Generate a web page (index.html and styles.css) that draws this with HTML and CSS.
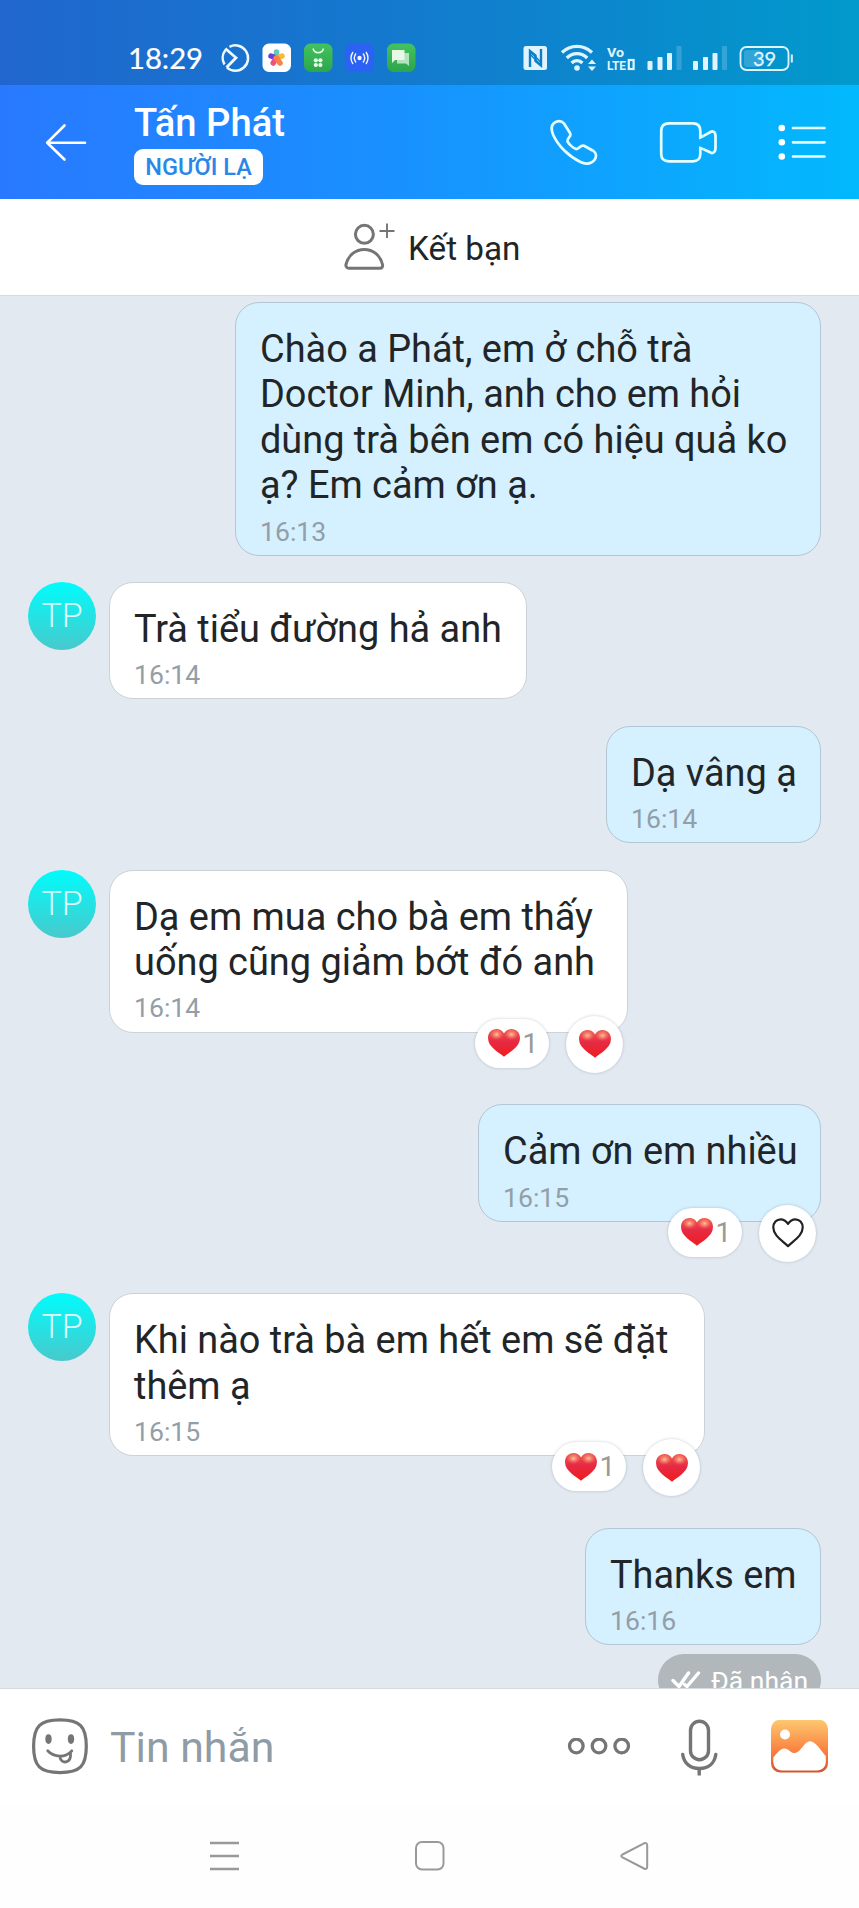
FILE: index.html
```html
<!DOCTYPE html>
<html lang="vi">
<head>
<meta charset="utf-8">
<title>Tấn Phát</title>
<link rel="stylesheet" href="styles.css">
</head>
<body>
<svg class="defs" width="0" height="0" aria-hidden="true">
  <defs>
    <linearGradient id="heart-red" x1="0" y1="0" x2="0" y2="1"><stop offset="0" stop-color="#ee5a50"/><stop offset=".45" stop-color="#e62a44"/><stop offset="1" stop-color="#f01c1c"/></linearGradient>
    <radialGradient id="heart-shine"><stop offset="0" stop-color="#ffc9a0" stop-opacity=".95"/><stop offset="1" stop-color="#ff8a6a" stop-opacity="0"/></radialGradient>
    <linearGradient id="green" x1="0" y1="0" x2="0" y2="1"><stop offset="0" stop-color="#43c35e"/><stop offset="1" stop-color="#2ca54c"/></linearGradient>
    <linearGradient id="photo" x1="0" y1="0" x2="0" y2="1"><stop offset="0" stop-color="#fdc870"/><stop offset=".6" stop-color="#fa8040"/><stop offset="1" stop-color="#d4542f"/></linearGradient>
    <symbol id="heart" viewBox="0 0 32 28">
      <path d="M16 27.700C12 24 0 18.500 0 9C0 3.500 3.700 0 8.300 0C12 0 14.800 2 16 4.500C17.200 2 20 0 23.700 0C28.300 0 32 3.500 32 9C32 18.500 20 24 16 27.700Z" fill="url(#heart-red)"/>
      <ellipse cx="8.500" cy="5.500" rx="7" ry="5.500" fill="url(#heart-shine)"/>
      <ellipse cx="23.500" cy="5.500" rx="7" ry="5.500" fill="url(#heart-shine)"/>
    </symbol>
  </defs>
</svg>
<div class="phone">
  <div class="top">
    <div class="status">
      <span class="clock">18:29</span>
      <svg class="status-left" width="196" height="32" viewBox="221 42 196 32" fill="none">
        <path d="M229.500 46.800A12.700 12.700 0 1 1 227 67.600M224.500 64.500A12.700 12.700 0 0 1 225.500 50" stroke="#eef8ff" stroke-width="2.500"/>
        <path d="M225.300 48.500L236 57.800L226.500 67.500" stroke="#eef8ff" stroke-width="2.800"/>
        <rect x="262.500" y="43.500" width="28.500" height="28.500" rx="6.500" fill="#fff"/>
        <g stroke-width="5.500" stroke-linecap="round"><path d="M276.500 57V52" stroke="#62c8bd"/><path d="M276.500 58L271 56" stroke="#6a3fd8"/><path d="M276.500 58L282 56" stroke="#fbb92e"/><path d="M276.500 58L273.200 63" stroke="#ee517f"/><path d="M276.500 58L280 63" stroke="#fa824a"/></g>
        <rect x="304" y="43.500" width="28.500" height="28.500" rx="6.500" fill="url(#green)"/>
        <path d="M313 48.500A5.400 5.400 0 0 0 323.500 48.500" stroke="#e9fbe9" stroke-width="1.500"/>
        <g fill="#e9fbe9"><circle cx="315.800" cy="60.300" r="2.100"/><circle cx="320.400" cy="60.300" r="2.100"/><circle cx="315.800" cy="65" r="2.100"/><circle cx="320.400" cy="65" r="2.100"/></g>
        <rect x="345.500" y="43.500" width="28.500" height="28.500" rx="6.500" fill="#2b62f3"/>
        <circle cx="359.500" cy="58" r="2.200" fill="#eef5ff"/>
        <path d="M356 53.500Q352.500 58 356 62.500M363 53.500Q366.500 58 363 62.500M353 52Q349 58 353 64M366 52Q370 58 366 64" stroke="#eef5ff" stroke-width="1.400"/>
        <rect x="387" y="43.500" width="28.500" height="28.500" rx="6.500" fill="url(#green)"/>
        <path d="M397 53H409V66L406 63.500H397Z" fill="#b3e3bc"/>
        <path d="M392 50H404.500V60H395L392 63Z" fill="#e7f8e9"/>
      </svg>
      <svg class="status-right" width="272" height="30" viewBox="522 42 272 30" fill="none">
        <rect x="523.500" y="45" width="23.500" height="24" rx="2.500" fill="#e0f4ff"/>
        <path d="M530 66V50L535.500 54.500V60L541 64.500V48" stroke="#0d7fc8" stroke-width="2.400"/>
        <path d="M530 50L541 61.500M530 53L541 64.500" stroke="#0d7fc8" stroke-width="1.600"/>
        <path d="M562 51.500A21.500 21.500 0 0 1 592 51.500M566.800 57A14.200 14.200 0 0 1 587.200 57M571.600 62A7.500 7.500 0 0 1 582.400 62" stroke="#e0f4ff" stroke-width="3.300"/>
        <circle cx="577" cy="67" r="2.800" fill="#e0f4ff"/>
        <path d="M588 63L592 58.500L596 63ZM588 65.500L592 70L596 65.500Z" fill="#e0f4ff"/>
        <g class="volte" fill="#e0f4ff"><text x="607" y="56" textLength="17" lengthAdjust="spacingAndGlyphs">Vo</text><text x="607" y="69" textLength="19" lengthAdjust="spacingAndGlyphs">LTE</text></g>
        <rect x="628.800" y="59" width="4.800" height="9" stroke="#e0f4ff" stroke-width="2.200"/>
        <g fill="#e0f4ff"><rect x="647.500" y="60" width="5" height="9" rx="1"/><rect x="657.500" y="56" width="5" height="13" rx="1"/><rect x="667" y="52" width="5" height="17" rx="1"/><rect x="693" y="60" width="5" height="9" rx="1"/><rect x="703" y="56" width="5" height="13" rx="1"/><rect x="712.500" y="52" width="5" height="17" rx="1"/></g>
        <g fill="#e0f4ff" opacity=".2"><rect x="676.500" y="45" width="5" height="24" rx="1"/><rect x="722" y="45" width="5" height="24" rx="1"/><rect x="744" y="49" width="17" height="17" rx="3"/></g>
        <rect x="740.500" y="46" width="48" height="23" rx="6" stroke="#e0f4ff" stroke-width="1.800"/>
        <path d="M791.800 53.500V61.500" stroke="#e0f4ff" stroke-width="2"/>
        <text class="battery" x="764.500" y="64.800" text-anchor="middle" fill="#e0f4ff">39</text>
      </svg>
    </div>
    <header class="header">
      <svg class="back" width="44" height="40" viewBox="44 122 44 40" fill="none" stroke="#fff" stroke-width="2.600" stroke-linecap="round" stroke-linejoin="round"><path d="M85 142.700H47.500M64.500 125.500L47.200 142.700L64.500 159.500"/></svg>
      <div class="who"><h1 class="name">Tấn Phát</h1><span class="badge">NGƯỜI LẠ</span></div>
      <svg class="tools" width="280" height="50" viewBox="548 117 280 50" fill="none" stroke="#e6ffff" stroke-width="2.700" stroke-linejoin="round" stroke-linecap="round">
        <path d="M553.500 123.500C557 120.300 561.500 120.500 564 123.500L570.300 133.500C571.500 137 566.500 138 567.500 141.500C569 144 573 148 576 149C579.500 149.500 580 144.500 584 145.700L593.500 151C596.500 153 596.800 157 594.500 160C591 164.500 585 164.300 580.500 162C569 156.500 558 146 553 134.500C551.500 130.500 551 126 553.500 123.500Z"/>
        <path stroke-linecap="butt" stroke-linejoin="miter" d="M700.300 137.500C705 135.500 707.500 133.500 711.500 131.500C714 131 715.500 133 715.500 136V148C715.500 151 714 153.500 711.500 153C707.500 151.500 705 149.500 700.300 148V154C700.300 158.500 697.500 161.300 693 161.300H669C664 161.300 661.200 158.500 661.200 154V131C661.200 126 664 123.300 669 123.300H693C697.500 123.300 700.300 126 700.300 131Z"/>
        <g fill="#fff" stroke="none"><circle cx="781.800" cy="128" r="3.300"/><circle cx="781.800" cy="142.300" r="3.300"/><circle cx="781.800" cy="156.500" r="3.300"/></g>
        <path d="M793 128H824.500M793 142.300H824.500M793 156.500H824.500"/>
      </svg>
    </header>
  </div>
  <div class="add-friend">
    <svg width="54" height="50" viewBox="342 222 54 50" fill="none" stroke="#757575" stroke-width="3"><circle cx="364.400" cy="234.300" r="9"/><path d="M349 268.300H380C382 268.300 383 266.500 382.500 264.500C380 255 373 249.500 364.300 249.500C355.500 249.500 348.500 255 346 264.500C345.500 266.500 347 268.300 349 268.300Z"/><path stroke-width="1.900" d="M379.500 231H394.500M387 223.500V238"/></svg>
    <span>Kết bạn</span>
  </div>
  <main class="chat">
    <div class="row mine first"><div class="bubble b1"><p>Chào a Phát, em ở chỗ trà<br>Doctor Minh, anh cho em hỏi<br>dùng trà bên em có hiệu quả ko<br>ạ? Em cảm ơn ạ.</p><time>16:13</time></div></div>
    <div class="row"><div class="avatar">TP</div><div class="bubble b2"><p>Trà tiểu đường hả anh</p><time>16:14</time></div></div>
    <div class="row mine"><div class="bubble b3"><p>Dạ vâng ạ</p><time>16:14</time></div></div>
    <div class="row reacted"><div class="avatar">TP</div><div class="bubble b4"><p>Dạ em mua cho bà em thấy<br>uống cũng giảm bớt đó anh</p><time>16:14</time>
      <div class="reactions"><span class="pill"><svg width="32" height="28"><use href="#heart"/></svg>1</span><span class="react"><svg width="32" height="28"><use href="#heart"/></svg></span></div></div></div>
    <div class="row mine reacted"><div class="bubble b5"><p>Cảm ơn em nhiều</p><time>16:15</time>
      <div class="reactions"><span class="pill"><svg width="32" height="28"><use href="#heart"/></svg>1</span><span class="react"><svg width="32" height="30" viewBox="0 0 32 30" fill="none" stroke="#222" stroke-width="2.200" stroke-linejoin="round"><path d="M16 28.200C10 22.500 1.300 17.500 1.300 9.500C1.300 4.500 4.500 1.300 8.700 1.300C12 1.300 14 3 16 5.800C18 3 20 1.300 23.300 1.300C27.500 1.300 30.700 4.500 30.700 9.500C30.700 17.500 22 22.500 16 28.200Z"/></svg></span></div></div></div>
    <div class="row reacted"><div class="avatar">TP</div><div class="bubble b6"><p>Khi nào trà bà em hết em sẽ đặt<br>thêm ạ</p><time>16:15</time>
      <div class="reactions"><span class="pill"><svg width="32" height="28"><use href="#heart"/></svg>1</span><span class="react"><svg width="32" height="28"><use href="#heart"/></svg></span></div></div></div>
    <div class="row mine last"><div class="bubble b7"><p>Thanks em</p><time>16:16</time></div></div>
    <div class="receipt"><svg width="30" height="20" viewBox="0 0 30 20" fill="none" stroke="#fff" stroke-width="3.400" stroke-linecap="round"><path d="M2 10.500L8 16.500L17.500 3M13.500 14.500L16 16.500L27.500 3"/></svg>Đã nhận</div>
  </main>
  <footer class="composer">
    <svg width="58" height="58" viewBox="31 1717.700 58 58" fill="none" stroke="#757575" stroke-width="3.200" stroke-linecap="round"><path d="M60 1719.500C80 1719.500 86.300 1726 86.300 1746C86.300 1766 80 1772.300 60 1772.300C40 1772.300 33.600 1766 33.600 1746C33.600 1726 40 1719.500 60 1719.500Z"/><g fill="#757575" stroke="none"><ellipse cx="48.500" cy="1738.800" rx="3.200" ry="4.800"/><ellipse cx="71" cy="1738.800" rx="3.200" ry="4.800"/></g><path stroke-width="2.800" d="M47.700 1750.500C54 1757.500 66 1757.500 71.800 1750.500M60 1757C61 1764 71.500 1763.500 70.500 1753"/></svg>
    <span class="placeholder">Tin nhắn</span>
    <svg class="dots" width="64" height="18" viewBox="567 1738 64 18" fill="none" stroke="#757575" stroke-width="3.300"><circle cx="576.300" cy="1746" r="6.800"/><circle cx="599" cy="1746" r="6.800"/><circle cx="621.700" cy="1746" r="6.800"/></svg>
    <svg class="mic" width="38" height="58" viewBox="680 1718 38 58" fill="none" stroke="#757575" stroke-width="3.400"><rect x="690.500" y="1721.200" width="18" height="38.500" rx="9"/><path stroke-linecap="round" d="M682.700 1754.500C684 1763.500 690.500 1768.500 699.200 1768.500C708 1768.500 714.500 1763.500 715.800 1754.500"/><path d="M699.200 1768V1775.500"/></svg>
    <svg width="58" height="54" viewBox="771 1719.500 58 54"><rect x="771" y="1719.300" width="57" height="52.700" rx="9" fill="url(#photo)"/><circle cx="785" cy="1734" r="5" fill="#fff"/><path d="M773.300 1757C776 1753.500 780 1749 783.500 1748C788 1747 791 1753 795 1752.500C801 1752 804 1741 810 1740.800C816 1741 821 1750.500 825.800 1755.500V1761C825.800 1766.500 822 1770 817 1770H782C777 1770 773.300 1766.500 773.300 1761Z" fill="#fff"/></svg>
  </footer>
  <nav class="nav">
    <svg width="30" height="30" fill="none" stroke="#999" stroke-width="2.400"><path d="M0 2H29M0 15H29M0 28H29"/></svg>
    <svg width="30" height="30" fill="none" stroke="#999" stroke-width="2"><rect x="1" y="1" width="27.500" height="27.500" rx="6"/></svg>
    <svg width="30" height="30" fill="none" stroke="#999" stroke-width="2"><path d="M3.500 13.500L25 2.300Q28.200 1 28.200 4.500V25.500Q28.200 29 25 27.500L3.500 16.500Q1 15 3.500 13.500Z"/></svg>
  </nav>
</div>
</body>
</html>
```
FILE: styles.css
```css
* { box-sizing: border-box; }
body { margin: 0; font-family: Roboto, "Noto Sans", sans-serif; color: #212527; background: #fff; }
svg { display: block; flex: none; }
.defs { position: absolute; }
.phone { width: 859px; height: 1908px; display: flex; flex-direction: column; overflow: hidden; background: #fefefe; }
.top { background: linear-gradient(90deg, #2979ff 0%, #1990ff 45%, #02b9fd 100%); }
.status { height: 85px; padding: 30px 65px 0 128px; background: rgba(0, 30, 10, .2); display: flex; align-items: center; }
.clock { font: 400 29.200px/32px Lato, sans-serif; color: #fff; width: 93px; -webkit-text-stroke: .2px #fff; }
.status-right { margin-left: auto; }
.volte { font: 700 13.500px Roboto, sans-serif; }
.battery { font: 400 20px Lato, sans-serif; stroke: #e0f4ff; stroke-width: .3px; }
.header { height: 114px; padding: 0 31px 0 44px; display: flex; align-items: center; }
.who { margin-left: 46px; padding-top: 1px; display: flex; flex-direction: column; align-items: flex-start; }
.name { margin: 0; font-size: 38.200px; line-height: 44px; font-weight: 500; color: #fff; white-space: nowrap; }
.badge { margin-top: 4px; height: 36px; width: 129px; border-radius: 9px; background: #fff; color: #2a86e8; font-size: 23.500px; font-weight: 500; line-height: 36px; text-align: center; white-space: nowrap; }
.tools { margin-left: auto; }
.add-friend { height: 97px; border-bottom: 1.500px solid #d5dade; background: #fff; display: flex; align-items: center; padding-left: 342px; font-size: 33.300px; white-space: nowrap; gap: 12px; }
.add-friend span { padding-top: 2px; }
.chat { height: 1392px; background: #e2e9f1; overflow: hidden; padding: 6px 38px 0 28px; display: flex; flex-direction: column; align-items: stretch; flex: none; }
.row { display: flex; align-items: flex-start; margin-bottom: 26.500px; flex: none; }
.row.first { margin-bottom: 25.500px; }
.mine { justify-content: flex-end; }
.row.reacted { margin-bottom: 71.600px; }
.row.last { margin-bottom: 9px; }
.avatar { width: 68px; height: 68px; margin-right: 13px; border-radius: 50%; background: linear-gradient(#00fcfc, #48c9cc); color: #dcfcfc; font-size: 34px; font-weight: 300; line-height: 67px; text-align: center; flex: none; }
.bubble { position: relative; background: #fff; border: 1px solid #ccd2d7; border-radius: 24px; padding: 24px 0 0 24px; white-space: nowrap; }
.mine .bubble { background: #d5f0ff; border-color: #b2c6d3; padding-left: 24px; }
.bubble p { margin: 0; font-size: 37.900px; line-height: 45.400px; }
.bubble time { display: block; margin-top: 5px; font-size: 26.600px; line-height: 36px; color: #929ea8; }
.b1 { width: 586px; height: 254px; }
.b2 { width: 418px; height: 117.500px; }
.b3 { width: 215px; height: 117.500px; }
.b4 { width: 519px; height: 163px; }
.b5 { width: 343px; height: 117.500px; }
.b6 { width: 596px; height: 163px; }
.b7 { width: 236px; height: 117.500px; }
.reactions { position: absolute; right: 4px; bottom: -41px; display: flex; align-items: center; gap: 17px; }
.pill, .react { background: #fff; box-shadow: 0 0 3px rgba(60, 80, 100, .3); display: flex; align-items: center; }
.pill { width: 74px; height: 49px; margin-bottom: 2px; border-radius: 25px; padding-left: 12.500px; gap: 3px; font-size: 28px; line-height: 49px; color: #999; }
.react { width: 57px; height: 57px; border-radius: 50%; justify-content: center; }
.receipt { align-self: flex-end; width: 163px; height: 52px; flex: none; border-radius: 26px; background: #b2b7bc; color: #fff; display: flex; align-items: center; gap: 10px; padding-left: 13px; font-size: 26.500px; white-space: nowrap; }
.composer { height: 117px; border-top: 1.500px solid #d5dade; background: #fff; display: flex; align-items: center; padding: 0 30.500px 0 31px; flex: none; }
.placeholder { margin-left: 21px; font-size: 42.800px; color: #8f9ba5; white-space: nowrap; }
.dots { margin-left: auto; }
.mic { margin: 0 52.500px 0 49px; }
.nav { flex: 1; display: flex; justify-content: space-between; padding: 36px 210px 0; }
```
